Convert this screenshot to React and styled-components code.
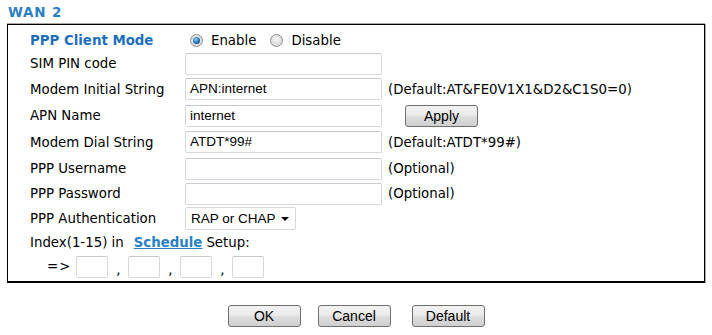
import React from "react";
import styled, { createGlobalStyle } from "styled-components";

const GlobalStyle = createGlobalStyle`
    body{
        margin: 0;
        background: #fff;
        font-family: "DejaVu Sans", Verdana, sans-serif;
        font-size: 13.33px;
        color: #000;
    }
`

const Page = styled.div`
    width: 712px;
    height: 335px;
    padding-top: 5px;
    box-sizing: border-box;
`

const Title = styled.div`
    margin-left: 8px;
    height: 17px;
    line-height: 15px;
    font-weight: bold;
    font-size: 13.5px;
    color: #2b7fc3;
    letter-spacing: 0.8px;
`

const Frame = styled.div`
    margin: 2px 0 0 7px;
    width: 698px;
    height: 259px;
    box-sizing: border-box;
    border: 1px solid #000;
    border-bottom-width: 2px;
    box-shadow: 0 -1px 0 #a8a8a8, 1px 0 0 #a8a8a8;
    padding: 3.75px 0 0 22px;
`

const Row = styled.div`
    display: grid;
    grid-template-columns: 155px 203px auto;
    align-items: center;
    height: ${p => p.h}px;
`

const Label = styled.div`
    color: ${p => (p.strong ? "#1d6fbe" : "#000")};
    font-weight: ${p => (p.strong ? "bold" : "normal")};
    white-space: nowrap;
`

const Field = styled.div`
    display: flex;
    align-items: center;
`

const Input = styled.div`
    box-sizing: border-box;
    width: ${p => p.w || 197}px;
    height: 22px;
    border: 1px solid #d5d9de;
    border-top-color: #c6cace;
    border-radius: 2px;
    background: #fff;
    font-family: "Liberation Sans", Arial, sans-serif;
    font-size: 13.5px;
    line-height: 20px;
    padding-left: 4px;
    white-space: nowrap;
`

const Note = styled.div`
    white-space: nowrap;
`

const Radio = styled.span`
    display: inline-block;
    box-sizing: border-box;
    width: 13px;
    height: 13px;
    border-radius: 50%;
    border: 1px solid #8e8f8f;
    background: radial-gradient(circle at 50% 40%, #f4f4f4 0%, #d6d6d6 80%);
    position: relative;
    margin: 0 8px 0 5px;
    &::after{
        content: "";
        display: ${p => (p.checked ? "block" : "none")};
        position: absolute;
        left: 2px;
        top: 2px;
        width: 7px;
        height: 7px;
        border-radius: 50%;
        background: radial-gradient(circle at 40% 35%, #8ad0f5 0%, #1f6fb3 55%, #0d3f73 100%);
    }
`

const RadioLabel = styled.span`
    margin-right: 9px;
`

const Button = styled.button`
    box-sizing: border-box;
    width: ${p => p.w || 73}px;
    height: 22px;
    border: 1px solid #707070;
    border-radius: 3px;
    background: linear-gradient(#f2f2f2 0%, #ebebeb 45%, #dddddd 55%, #cfcfcf 100%);
    font-family: "Liberation Sans", Arial, sans-serif;
    font-size: 14px;
    color: #000;
    padding: 0;
    line-height: 20px;
`

const ApplyWrap = styled.div`
    padding-left: 17px;
`

const Select = styled.div`
    box-sizing: border-box;
    width: 111px;
    height: 23px;
    border: 1px solid #d5d9de;
    border-radius: 2px;
    display: flex;
    align-items: center;
    justify-content: space-between;
    padding: 0 6px 0 5px;
    font-family: "Liberation Sans", Arial, sans-serif;
    font-size: 13.5px;
`

const Arrow = styled.span`
    width: 0;
    height: 0;
    border-left: 4px solid transparent;
    border-right: 4px solid transparent;
    border-top: 4px solid #000;
    margin-top: 2px;
`

const IndexLine = styled.div`
    display: flex;
    align-items: center;
    height: ${p => p.h}px;
    white-space: nowrap;
`

const Link = styled.a`
    color: #2a7fc6;
    font-weight: bold;
    text-decoration: underline;
    margin: 0 4px 0 10px;
`

const Slots = styled.div`
    display: flex;
    align-items: center;
    height: ${p => p.h}px;
    padding-left: 17px;
`

const Arrowish = styled.span`
    letter-spacing: 1px;
    margin-right: 5px;
`

const Comma = styled.span`
    width: 20px;
    text-align: center;
    padding-top: 6px;
`

const Actions = styled.div`
    display: flex;
    justify-content: center;
    gap: 17px;
    margin-top: 22px;
    & > button:last-child{
        margin-left: 4px;
    }
`

const rows = [
    { label: "SIM PIN code", value: "", h: 24.5 },
    { label: "Modem Initial String", value: "APN:internet", note: "(Default:AT&FE0V1X1&D2&C1S0=0)", h: 26.5 },
    { label: "APN Name", value: "internet", apply: true, h: 26.75 },
    { label: "Modem Dial String", value: "ATDT*99#", note: "(Default:ATDT*99#)", h: 26.5 },
    { label: "PPP Username", value: "", note: "(Optional)", h: 26 },
    { label: "PPP Password", value: "", note: "(Optional)", h: 24.5 },
]

const App = () => {
    return (
        <Page>
            <GlobalStyle />
            <Title>WAN 2</Title>
            <Frame>
                <Row h={22.5}>
                    <Label strong>PPP Client Mode</Label>
                    <Field>
                        <Radio checked /><RadioLabel>Enable</RadioLabel>
                        <Radio /><span>Disable</span>
                    </Field>
                </Row>
                {rows.map(r => (
                    <Row key={r.label} h={r.h}>
                        <Label>{r.label}</Label>
                        <Field><Input>{r.value}</Input></Field>
                        {r.note && <Note>{r.note}</Note>}
                        {r.apply && <ApplyWrap><Button>Apply</Button></ApplyWrap>}
                    </Row>
                ))}
                <Row h={24.25}>
                    <Label>PPP Authentication</Label>
                    <Field>
                        <Select>RAP or CHAP<Arrow /></Select>
                    </Field>
                </Row>
                <IndexLine h={24.5}>
                    Index(1-15) in<Link>Schedule</Link>Setup:
                </IndexLine>
                <Slots h={23.5}>
                    <Arrowish>=&gt;</Arrowish>
                    <Input w={32} />
                    <Comma>,</Comma>
                    <Input w={32} />
                    <Comma>,</Comma>
                    <Input w={32} />
                    <Comma>,</Comma>
                    <Input w={32} />
                </Slots>
            </Frame>
            <Actions>
                <Button>OK</Button>
                <Button>Cancel</Button>
                <Button>Default</Button>
            </Actions>
        </Page>
    )
}

export default App;
